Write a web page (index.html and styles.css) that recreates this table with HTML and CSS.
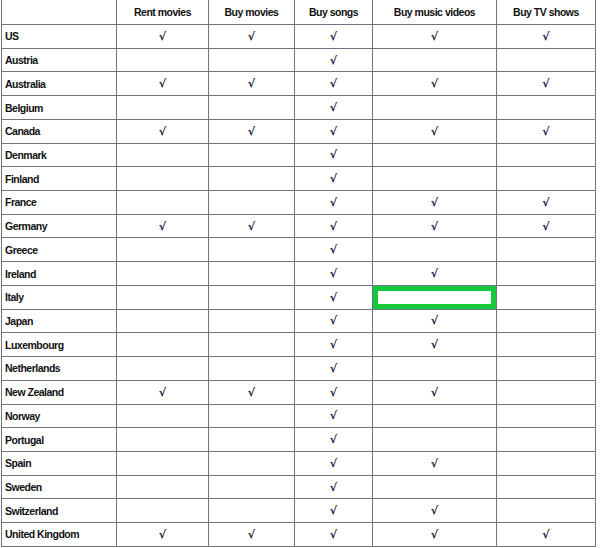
FILE: index.html
```html
<!DOCTYPE html>
<html>
<head>
<meta charset="utf-8">
<link rel="stylesheet" href="styles.css">
</head>
<body>
<div class="grid">
  <div class="c"></div><div class="c h">Rent movies</div><div class="c h">Buy movies</div><div class="c h">Buy songs</div><div class="c h">Buy music videos</div><div class="c h">Buy TV shows</div>
  <div class="c n">US</div><div class="c k">√</div><div class="c k">√</div><div class="c k">√</div><div class="c k">√</div><div class="c k">√</div>
  <div class="c n">Austria</div><div class="c"></div><div class="c"></div><div class="c k">√</div><div class="c"></div><div class="c"></div>
  <div class="c n">Australia</div><div class="c k">√</div><div class="c k">√</div><div class="c k">√</div><div class="c k">√</div><div class="c k">√</div>
  <div class="c n">Belgium</div><div class="c"></div><div class="c"></div><div class="c k">√</div><div class="c"></div><div class="c"></div>
  <div class="c n">Canada</div><div class="c k">√</div><div class="c k">√</div><div class="c k">√</div><div class="c k">√</div><div class="c k">√</div>
  <div class="c n">Denmark</div><div class="c"></div><div class="c"></div><div class="c k">√</div><div class="c"></div><div class="c"></div>
  <div class="c n">Finland</div><div class="c"></div><div class="c"></div><div class="c k">√</div><div class="c"></div><div class="c"></div>
  <div class="c n">France</div><div class="c"></div><div class="c"></div><div class="c k">√</div><div class="c k">√</div><div class="c k">√</div>
  <div class="c n">Germany</div><div class="c k">√</div><div class="c k">√</div><div class="c k">√</div><div class="c k">√</div><div class="c k">√</div>
  <div class="c n">Greece</div><div class="c"></div><div class="c"></div><div class="c k">√</div><div class="c"></div><div class="c"></div>
  <div class="c n">Ireland</div><div class="c"></div><div class="c"></div><div class="c k">√</div><div class="c k">√</div><div class="c"></div>
  <div class="c n">Italy</div><div class="c"></div><div class="c"></div><div class="c k">√</div><div class="c sel"></div><div class="c"></div>
  <div class="c n">Japan</div><div class="c"></div><div class="c"></div><div class="c k">√</div><div class="c k">√</div><div class="c"></div>
  <div class="c n">Luxembourg</div><div class="c"></div><div class="c"></div><div class="c k">√</div><div class="c k">√</div><div class="c"></div>
  <div class="c n">Netherlands</div><div class="c"></div><div class="c"></div><div class="c k">√</div><div class="c"></div><div class="c"></div>
  <div class="c n">New Zealand</div><div class="c k">√</div><div class="c k">√</div><div class="c k">√</div><div class="c k">√</div><div class="c"></div>
  <div class="c n">Norway</div><div class="c"></div><div class="c"></div><div class="c k">√</div><div class="c"></div><div class="c"></div>
  <div class="c n">Portugal</div><div class="c"></div><div class="c"></div><div class="c k">√</div><div class="c"></div><div class="c"></div>
  <div class="c n">Spain</div><div class="c"></div><div class="c"></div><div class="c k">√</div><div class="c k">√</div><div class="c"></div>
  <div class="c n">Sweden</div><div class="c"></div><div class="c"></div><div class="c k">√</div><div class="c"></div><div class="c"></div>
  <div class="c n">Switzerland</div><div class="c"></div><div class="c"></div><div class="c k">√</div><div class="c k">√</div><div class="c"></div>
  <div class="c n">United Kingdom</div><div class="c k">√</div><div class="c k">√</div><div class="c k">√</div><div class="c k">√</div><div class="c k">√</div>
</div>
</body>
</html>
```
FILE: styles.css
```css
html, body {
  margin: 0;
  padding: 0;
  background: #fff;
}
body {
  font-family: "Liberation Sans", Arial, sans-serif;
  color: #111;
}
.grid {
  margin-left: 1px;
  width: 595px;
  box-sizing: border-box;
  display: grid;
  grid-template-columns: 114px 91px 85px 77px 123px 98px;
  grid-template-rows: 24px repeat(22, 22.73px);
  gap: 1px;
  padding: 0 1px 1px 1px;
  background: #6f7582;
}
.c {
  background: #fff;
  display: flex;
  align-items: center;
  justify-content: center;
  font-size: 10.5px;
  font-weight: bold;
  letter-spacing: -0.5px;
}
.n {
  justify-content: flex-start;
  padding-left: 3px;
}
.k {
  font-family: "DejaVu Sans", sans-serif;
  font-weight: bold;
  font-size: 11px;
  letter-spacing: 0;
  color: #1c2238;
}
.sel {
  box-shadow: inset 0 0 0 5px #14c93a;
}
```
